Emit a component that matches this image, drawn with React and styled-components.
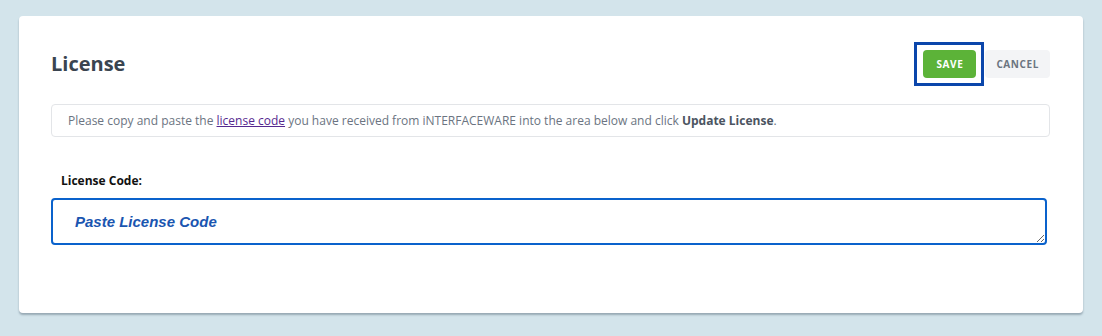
import React from "react";
import styled, { createGlobalStyle } from "styled-components";

const GlobalStyle = createGlobalStyle`
  html, body {
    margin: 0;
    padding: 0;
    background: #d3e4eb;
    font-family: "Open Sans", "Noto Sans", sans-serif;
  }
`;

const Page = styled.div`
  padding: 16px 19px 22px 19px;
`;

const Card = styled.div`
  background: #ffffff;
  border-radius: 4px;
  box-shadow: 0 2px 2px rgba(80, 100, 115, 0.45);
  padding: 34px 33px 68px 32px;
  min-height: 195px;
`;

const Header = styled.div`
  display: flex;
  align-items: center;
  justify-content: space-between;
  height: 28px;
`;

const Title = styled.h1`
  margin: 0;
  font-size: 20px;
  font-weight: 700;
  color: #3a4450;
  line-height: 28px;
`;

const Actions = styled.div`
  display: flex;
  align-items: center;
  gap: 1px;
`;

// square focus ring drawn around the active button
const FocusRing = styled.span`
  display: inline-flex;
  border: 3px solid #0b46ab;
  padding: 5px 5px 5px 6px;
`;

const Button = styled.button`
  height: 28px;
  border: none;
  border-radius: 4px;
  padding: 0 ${(p) => (p.primary ? "13px" : "11px")};
  font-family: "Open Sans", sans-serif;
  font-size: 10px;
  font-weight: 700;
  letter-spacing: 0.6px;
  text-transform: uppercase;
  cursor: pointer;
  outline: none;
  background: ${(p) => (p.primary ? "#5cb338" : "#f3f4f6")};
  color: ${(p) => (p.primary ? "#ffffff" : "#6b7480")};
`;

const Notice = styled.div`
  margin-top: 26px;
  border: 1px solid #e3e5e8;
  border-radius: 4px;
  padding: 7px 16px 7px 16px;
  font-size: 12px;
  line-height: 17px;
  color: #6b7481;
`;

const Link = styled.a`
  color: #55288f;
  text-decoration: underline;
`;

const Strong = styled.strong`
  color: #4b5461;
  font-weight: 700;
`;

const Field = styled.div`
  margin-top: 35px;
`;

const Label = styled.label`
  display: block;
  padding-left: 10px;
  font-size: 12px;
  font-weight: 700;
  line-height: 17px;
  color: #111111;
  margin-bottom: 9px;
`;

const CodeInput = styled.textarea`
  display: block;
  box-sizing: border-box;
  width: calc(100% - 3px);
  height: 47px;
  border: 2px solid #0a62cc;
  border-radius: 4px;
  padding: 13px 22px 11px 22px;
  font-family: "Liberation Sans", Arial, sans-serif;
  font-size: 15px;
  font-style: italic;
  font-weight: 700;
  outline: none;
  resize: vertical;
  &::placeholder {
    color: #1a55b0;
    opacity: 1;
  }
`;

export default function App() {
  return (
    <>
      <GlobalStyle />
      <Page>
        <Card>
          <Header>
            <Title>License</Title>
            <Actions>
              <FocusRing>
                <Button primary>Save</Button>
              </FocusRing>
              <Button>Cancel</Button>
            </Actions>
          </Header>
          <Notice>
            Please copy and paste the <Link href="#">license code</Link> you have
            received from iNTERFACEWARE into the area below and click{" "}
            <Strong>Update License</Strong>.
          </Notice>
          <Field>
            <Label>License Code:</Label>
            <CodeInput placeholder="Paste License Code" />
          </Field>
        </Card>
      </Page>
    </>
  );
}
